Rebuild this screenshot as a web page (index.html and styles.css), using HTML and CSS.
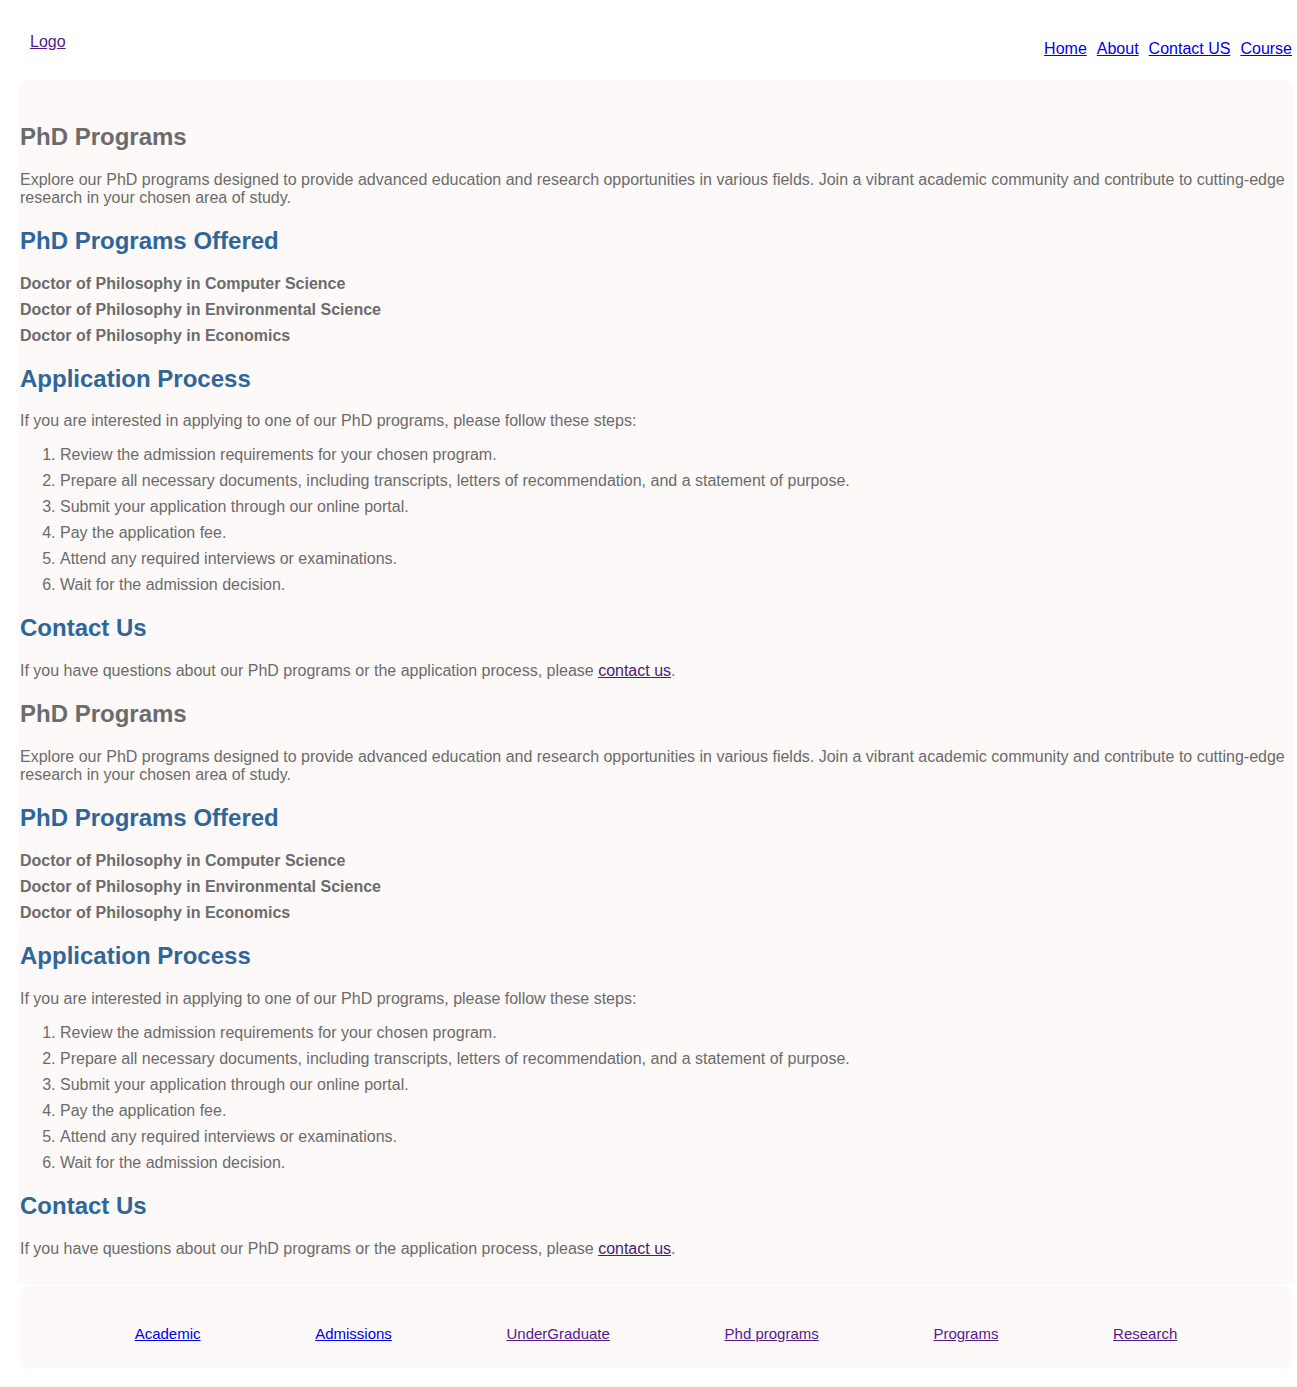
FILE: index.html
```html
<!DOCTYPE html>
<html lang="en">
<head>
<meta charset="utf-8">
<title>PhD Programs</title>
<link rel="stylesheet" href="styles.css">
</head>
<body>
<div class="page">
  <header class="site-header">
    <a href="#" class="logo visited">Logo</a>
    <nav class="top-nav">
      <a href="#">Home</a>
      <a href="#">About</a>
      <a href="#">Contact US</a>
      <a href="#">Course</a>
    </nav>
  </header>

  <main class="card">
    <section class="block">
      <h1>PhD Programs</h1>
      <p>Explore our PhD programs designed to provide advanced education and research opportunities in various fields. Join a vibrant academic community and contribute to cutting-edge research in your chosen area of study.</p>
      <h2>PhD Programs Offered</h2>
      <ul class="programs">
        <li>Doctor of Philosophy in Computer Science</li>
        <li>Doctor of Philosophy in Environmental Science</li>
        <li>Doctor of Philosophy in Economics</li>
      </ul>
      <h2>Application Process</h2>
      <p>If you are interested in applying to one of our PhD programs, please follow these steps:</p>
      <ol class="steps">
        <li>Review the admission requirements for your chosen program.</li>
        <li>Prepare all necessary documents, including transcripts, letters of recommendation, and a statement of purpose.</li>
        <li>Submit your application through our online portal.</li>
        <li>Pay the application fee.</li>
        <li>Attend any required interviews or examinations.</li>
        <li>Wait for the admission decision.</li>
      </ol>
      <h2>Contact Us</h2>
      <p>If you have questions about our PhD programs or the application process, please <a href="#" class="contact-link">contact us</a>.</p>
    </section>
    <section class="block">
      <h1>PhD Programs</h1>
      <p>Explore our PhD programs designed to provide advanced education and research opportunities in various fields. Join a vibrant academic community and contribute to cutting-edge research in your chosen area of study.</p>
      <h2>PhD Programs Offered</h2>
      <ul class="programs">
        <li>Doctor of Philosophy in Computer Science</li>
        <li>Doctor of Philosophy in Environmental Science</li>
        <li>Doctor of Philosophy in Economics</li>
      </ul>
      <h2>Application Process</h2>
      <p>If you are interested in applying to one of our PhD programs, please follow these steps:</p>
      <ol class="steps">
        <li>Review the admission requirements for your chosen program.</li>
        <li>Prepare all necessary documents, including transcripts, letters of recommendation, and a statement of purpose.</li>
        <li>Submit your application through our online portal.</li>
        <li>Pay the application fee.</li>
        <li>Attend any required interviews or examinations.</li>
        <li>Wait for the admission decision.</li>
      </ol>
      <h2>Contact Us</h2>
      <p>If you have questions about our PhD programs or the application process, please <a href="#" class="contact-link">contact us</a>.</p>
    </section>
  </main>

  <footer class="site-footer">
    <a href="#">Academic</a>
    <a href="#">Admissions</a>
    <a href="#" class="visited">UnderGraduate</a>
    <a href="#" class="visited">Phd programs</a>
    <a href="#" class="visited">Programs</a>
    <a href="#" class="visited">Research</a>
  </footer>
</div>
</body>
</html>
```

FILE: styles.css
```css
html, body {
  margin: 0;
  padding: 0;
  background: #ffffff;
}

body {
  font-family: "Liberation Sans", Arial, sans-serif;
  font-size: 16px;
  color: #6b6b6b;
}

a {
  color: #0000ee;
}

a.visited {
  color: #551a8b;
}

.page {
  padding: 0 5px 0 20px;
}

.site-header {
  display: flex;
  justify-content: space-between;
  align-items: flex-start;
  height: 80px;
  box-sizing: border-box;
}

.logo {
  margin-top: 33px;
  margin-left: 10px;
}

.top-nav {
  display: flex;
  gap: 10px;
  margin-top: 40px;
}

.card {
  display: block;
  background: #fdf9f8;
  border-radius: 8px;
  box-shadow: 0 1px 4px rgba(0, 0, 0, 0.06);
  padding: 23px 0 8px 0;
}

.block h1,
.block h2 {
  font-size: 24px;
  font-weight: bold;
  margin: 0.83em 0;
}

.block h1 {
  color: #6b6b6b;
}

.block h2 {
  color: #2f6699;
}

.block p {
  margin: 1em 0;
}

.programs {
  list-style: none;
  padding: 0;
  margin: 1em 0;
  font-weight: bold;
}

.programs li,
.steps li {
  margin-bottom: 8px;
}

.steps {
  padding-left: 40px;
  margin: 1em 0;
}

.contact-link {
  color: #4b1877;
}

.site-footer {
  display: flex;
  justify-content: space-evenly;
  background: #fdf9f8;
  border-radius: 8px;
  box-shadow: 0 1px 4px rgba(0, 0, 0, 0.04);
  margin-top: 4px;
  padding: 39px 0 26px;
  font-size: 15px;
}
```
